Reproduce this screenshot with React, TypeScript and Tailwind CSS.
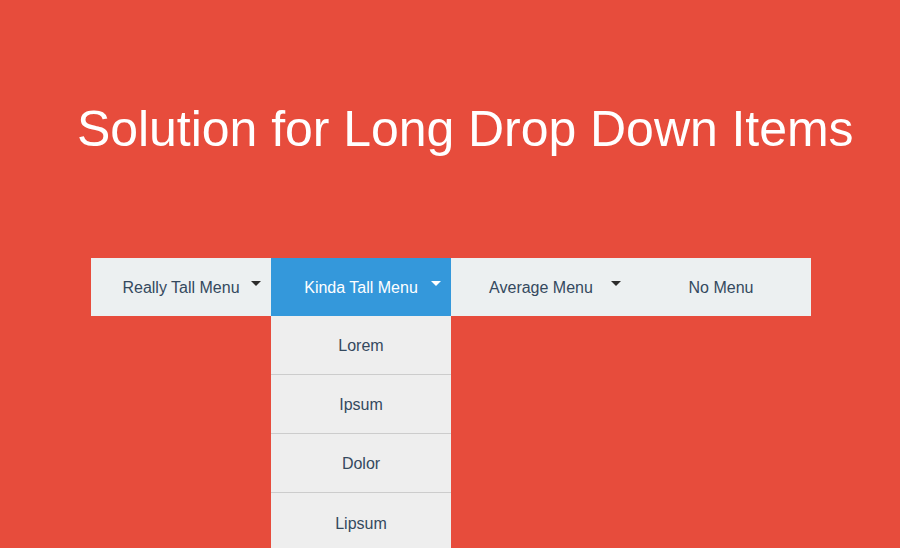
const menus = [
  { label: "Really Tall Menu", caret: true },
  { label: "Kinda Tall Menu", caret: true, active: true },
  { label: "Average Menu", caret: true },
  { label: "No Menu", caret: false },
];

const items = ["Lorem", "Ipsum", "Dolor", "Lipsum"];

function Caret({ light }: { light?: boolean }) {
  return (
    <span
      className={`absolute right-[10px] top-[23px] w-0 h-0 border-l-[5px] border-r-[5px] border-t-[5px] border-l-transparent border-r-transparent ${
        light ? "border-t-white" : "border-t-[#2c2c2c]"
      }`}
    />
  );
}

export default function App() {
  return (
    <div className="w-[900px] h-[548px] overflow-hidden bg-[#e74c3c] font-['Liberation_Sans',Arial,sans-serif]">
      <h1 className="pt-[96px] pl-[77px] text-[50px] leading-[66px] text-white font-normal whitespace-nowrap tracking-[-0.05px]">
        Solution for Long Drop Down Items
      </h1>
      <nav className="mt-[96px] ml-[91px] w-[720px] flex bg-[#ecf0f1]">
        {menus.map((m) => (
          <div key={m.label} className="relative w-[180px]">
            <div
              className={`relative h-[58px] flex items-center justify-center text-[16px] ${
                m.active ? "bg-[#3498db] text-white" : "text-[#34495e]"
              }`}
            >
              <span className="pt-[1px]">{m.label}</span>
              {m.caret && <Caret light={m.active} />}
            </div>
            {m.active && (
              <ul className="absolute left-0 top-[58px] w-[180px] bg-[#eeeeee]">
                {items.map((it, i) => (
                  <li
                    key={it}
                    className={`h-[59px] pt-[2px] flex items-center justify-center text-[16px] text-[#34495e] ${
                      i < items.length - 1 ? "border-b border-[#cccccc]" : ""
                    }`}
                  >
                    {it}
                  </li>
                ))}
              </ul>
            )}
          </div>
        ))}
      </nav>
    </div>
  );
}
